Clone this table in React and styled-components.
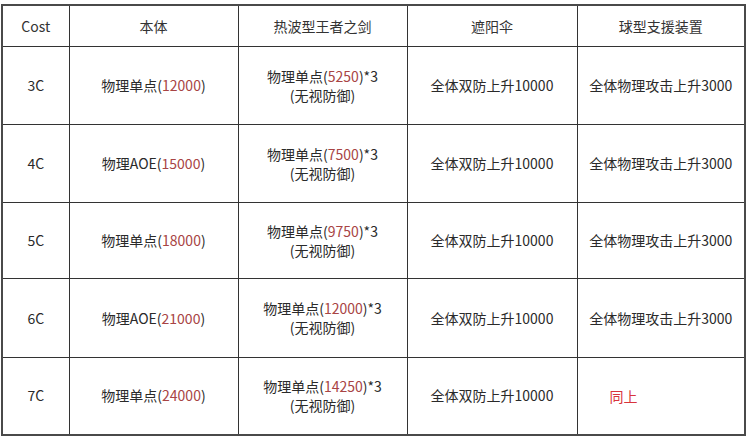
import React from 'react';
import styled, { createGlobalStyle } from 'styled-components';

const GlobalStyle = createGlobalStyle`
  html, body {
    margin: 0;
    padding: 0;
    background: #ffffff;
  }
  body {
    font-family: "Noto Sans CJK SC", "Noto Sans", sans-serif;
    color: #262626;
  }
`;

const Page = styled.div`
  width: 748px;
  height: 437px;
  padding: 4px 0 0 1px;
  box-sizing: border-box;
  overflow: hidden;
`;

const Table = styled.table`
  width: 743px;
  table-layout: fixed;
  border-collapse: collapse;
  border: 2px solid #4a4a4a;
  font-size: 14px;
`;

const HeadCell = styled.th`
  height: 40px;
  padding: 0;
  border: 1px solid #333;
  font-weight: normal;
  color: #333;
  text-align: center;
  vertical-align: middle;
`;

const Cell = styled.td`
  padding: 0 ${p => (p.$align === 'left' ? '0 0 32px' : '0')};
  border: 1px solid #333;
  text-align: ${p => p.$align || 'center'};
  vertical-align: middle;
  line-height: 19px;
  color: #2a2a2a;
`;

const Num = styled.span`
  color: #a84444;
`;

const Same = styled.span`
  color: #d8343c;
  position: relative;
  top: 1px;
`;

const cols = [67, 169, 169, 170, 168];
const headers = ['Cost', '本体', '热波型王者之剑', '遮阳伞', '球型支援装置'];

const rows = [
  { cost: '3C', kind: '单点', base: '12000', sword: '5250', h: 78 },
  { cost: '4C', kind: 'AOE', base: '15000', sword: '7500', h: 78 },
  { cost: '5C', kind: '单点', base: '18000', sword: '9750', h: 76 },
  { cost: '6C', kind: 'AOE', base: '21000', sword: '12000', h: 79 },
  { cost: '7C', kind: '单点', base: '24000', sword: '14250', h: 77, same: true },
];

export default function App() {
  return (
    <Page>
      <GlobalStyle />
      <Table>
        <colgroup>
          {cols.map((w, i) => (
            <col key={i} style={{ width: w }} />
          ))}
        </colgroup>
        <thead>
          <tr>
            {headers.map(h => (
              <HeadCell key={h}>{h}</HeadCell>
            ))}
          </tr>
        </thead>
        <tbody>
          {rows.map(r => (
            <tr key={r.cost} style={{ height: r.h }}>
              <Cell>{r.cost}</Cell>
              <Cell>
                物理{r.kind}(<Num>{r.base}</Num>)
              </Cell>
              <Cell>
                物理单点(<Num>{r.sword}</Num>)*3
                <br />
                (无视防御)
              </Cell>
              <Cell>全体双防上升10000</Cell>
              {r.same ? (
                <Cell $align="left">
                  <Same>同上</Same>
                </Cell>
              ) : (
                <Cell>全体物理攻击上升3000</Cell>
              )}
            </tr>
          ))}
        </tbody>
      </Table>
    </Page>
  );
}
